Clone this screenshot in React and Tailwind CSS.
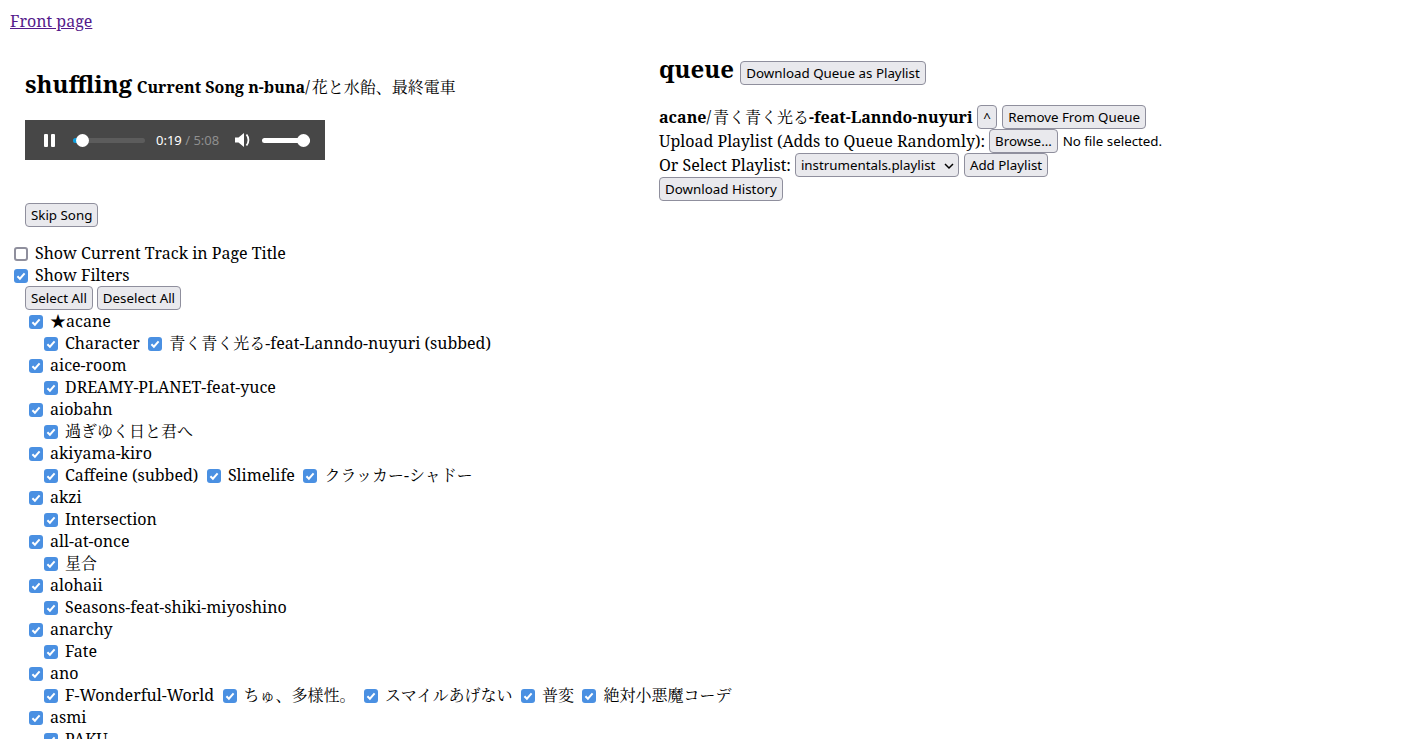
import React from "react";

const serif = "font-['Noto_Serif','Noto_Serif_CJK_JP','DejaVu_Serif','Noto_Sans_CJK_JP',serif]";

const artists = [
  { name: "★acane", songs: ["Character", "青く青く光る-feat-Lanndo-nuyuri (subbed)"] },
  { name: "aice-room", songs: ["DREAMY-PLANET-feat-yuce"] },
  { name: "aiobahn", songs: ["過ぎゆく日と君へ"] },
  { name: "akiyama-kiro", songs: ["Caffeine (subbed)", "Slimelife", "クラッカー-シャドー"] },
  { name: "akzi", songs: ["Intersection"] },
  { name: "all-at-once", songs: ["星合"] },
  { name: "alohaii", songs: ["Seasons-feat-shiki-miyoshino"] },
  { name: "anarchy", songs: ["Fate"] },
  { name: "ano", songs: ["F-Wonderful-World", "ちゅ、多様性。", "スマイルあげない", "普変", "絶対小悪魔コーデ"] },
  { name: "asmi", songs: ["PAKU"] },
];

const Check = ({ checked = true }) => (
  <span className="relative inline-flex w-[14px] h-[14px] ml-1 mr-[7px] mt-[2px] shrink-0">
    <input
      type="checkbox"
      defaultChecked={checked}
      className={
        checked
          ? "appearance-none w-[14px] h-[14px] rounded-[3px] bg-[#4a90e2]"
          : "appearance-none w-[14px] h-[14px] rounded-[3px] border-2 border-[#8f8f9d] bg-white"
      }
    />
    {checked && (
      <svg viewBox="0 0 14 14" className="absolute inset-0 w-[14px] h-[14px] pointer-events-none">
        <path d="M3.4 7.2 5.9 9.7 10.6 4.4" fill="none" stroke="white" strokeWidth="2" />
      </svg>
    )}
  </span>
);

const Btn = ({ children, className = "" }) => (
  <button className={`font-['Noto_Sans',sans-serif] text-[13.33px] leading-[18px] h-6 px-[5px] bg-[#e9e9ed] border border-[#8f8f9d] rounded-[4px] text-black whitespace-nowrap ${className}`}>
    {children}
  </button>
);

const Player = () => (
  <div className="w-[300px] h-10 bg-[#474747] flex items-center pl-[19px] font-['Noto_Sans',sans-serif] text-[13px] text-white">
    <svg viewBox="0 0 11 13" className="w-[11px] h-[13px] shrink-0">
      <rect x="0" y="0" width="4" height="13" rx="1" fill="white" />
      <rect x="7" y="0" width="4" height="13" rx="1" fill="white" />
    </svg>
    <div className="relative w-[72px] h-[5px] ml-[18px] bg-[#5c5c5c] rounded-full">
      <div className="absolute left-0 top-0 h-[5px] w-[6px] bg-[#0a9fe0] rounded-l-full" />
      <div className="absolute left-[3px] -top-[4px] w-[13px] h-[13px] bg-white rounded-full" />
    </div>
    <div className="ml-[11px] whitespace-nowrap">
      0:19<span className="text-[#8f8f8f]"> / 5:08</span>
    </div>
    <svg viewBox="0 0 17 14" className="w-[17px] h-[14px] ml-[16px] shrink-0">
      <path d="M0 4.5h3.5L9 0v14L3.5 9.5H0z" fill="white" />
      <path d="M11.5 1.5c2.6 3.2 2.6 7.8 0 11" fill="none" stroke="white" strokeWidth="1.8" />
    </svg>
    <div className="relative w-[48px] h-[5px] ml-[10px] bg-white rounded-full">
      <div className="absolute right-0 -top-[4px] w-[13px] h-[13px] bg-white rounded-full" />
    </div>
  </div>
);

const Row = ({ className = "h-[22px]", children }) => (
  <div className={`flex items-center whitespace-nowrap ${className}`}>{children}</div>
);

export default function App() {
  return (
    <div className={`${serif} text-[16px] leading-[22px] text-black bg-white h-[739px] overflow-hidden pt-[10px] px-[10px]`}>
      <a href="#" className="underline text-[#551a8b]">Front page</a>

      <div className="flex">
        <div className="w-[649px] pl-[15px] pt-[36px] shrink-0">
          <div className="flex items-baseline h-[40px]">
            <h1 className="text-[24px] font-bold leading-[32px]">shuffling</h1>
            <span className="ml-[4.5px] font-bold">Current Song n-buna<span className="font-normal"><span className="mr-[2px]">/</span>花と水飴、最終電車</span></span>
          </div>
          <div className="mt-[12px]"><Player /></div>
          <div className="mt-[43px]"><Btn>Skip Song</Btn></div>
        </div>
        <div className="pt-[21px]">
          <div className="flex items-center h-[32px] gap-[6px]">
            <h1 className="text-[24px] font-bold leading-[32px]">queue</h1>
            <Btn className="mt-[8px] w-[186px]">Download Queue as Playlist</Btn>
          </div>
          <div className="mt-[20px]">
            <Row className="h-[24px]">
              <span className="font-bold">acane<span className="font-normal"><span className="mr-[2px]">/</span>青く青く光る</span>-feat-Lanndo-nuyuri</span>
              <Btn className="ml-[4.5px] w-[20px]">^</Btn>
              <Btn className="ml-[5px]">Remove From Queue</Btn>
            </Row>
            <Row className="h-[24px]">
              Upload Playlist (Adds to Queue Randomly):
              <Btn className="ml-1">Browse…</Btn>
              <span className="ml-[5px] font-['Noto_Sans',sans-serif] text-[13.33px]">No file selected.</span>
            </Row>
            <Row className="h-[24px]">
              Or Select Playlist:
              <span className="relative ml-1">
                <select className="appearance-none font-['Noto_Sans',sans-serif] text-[13.33px] leading-[18px] h-6 w-[164px] px-[5px] bg-[#e9e9ed] border border-[#8f8f9d] rounded-[4px]">
                  <option>instrumentals.playlist</option>
                </select>
                <svg viewBox="0 0 10 10" className="absolute right-[5px] top-[8px] w-[10px] h-[10px] pointer-events-none">
                  <path d="M1 3 5 7l4-4" fill="none" stroke="black" strokeWidth="1.5" />
                </svg>
              </span>
              <Btn className="ml-[5px]">Add Playlist</Btn>
            </Row>
            <Row className="h-[24px]"><Btn>Download History</Btn></Row>
          </div>
        </div>
      </div>

      <div className="mt-[15px]">
        <Row><Check checked={false} />Show Current Track in Page Title</Row>
        <Row><Check />Show Filters</Row>
        <Row className="h-[24px] pl-[15px] gap-1"><Btn>Select All</Btn><Btn>Deselect All</Btn></Row>
        {artists.map((a) => (
          <div key={a.name} className="pl-[15px]">
            <Row><Check />{a.name}</Row>
            <Row className="h-[22px] pl-[15px]">
              {a.songs.map((s) => (
                <span key={s} className="flex items-center mr-[4.5px]"><Check />{s}</span>
              ))}
            </Row>
          </div>
        ))}
      </div>
    </div>
  );
}
